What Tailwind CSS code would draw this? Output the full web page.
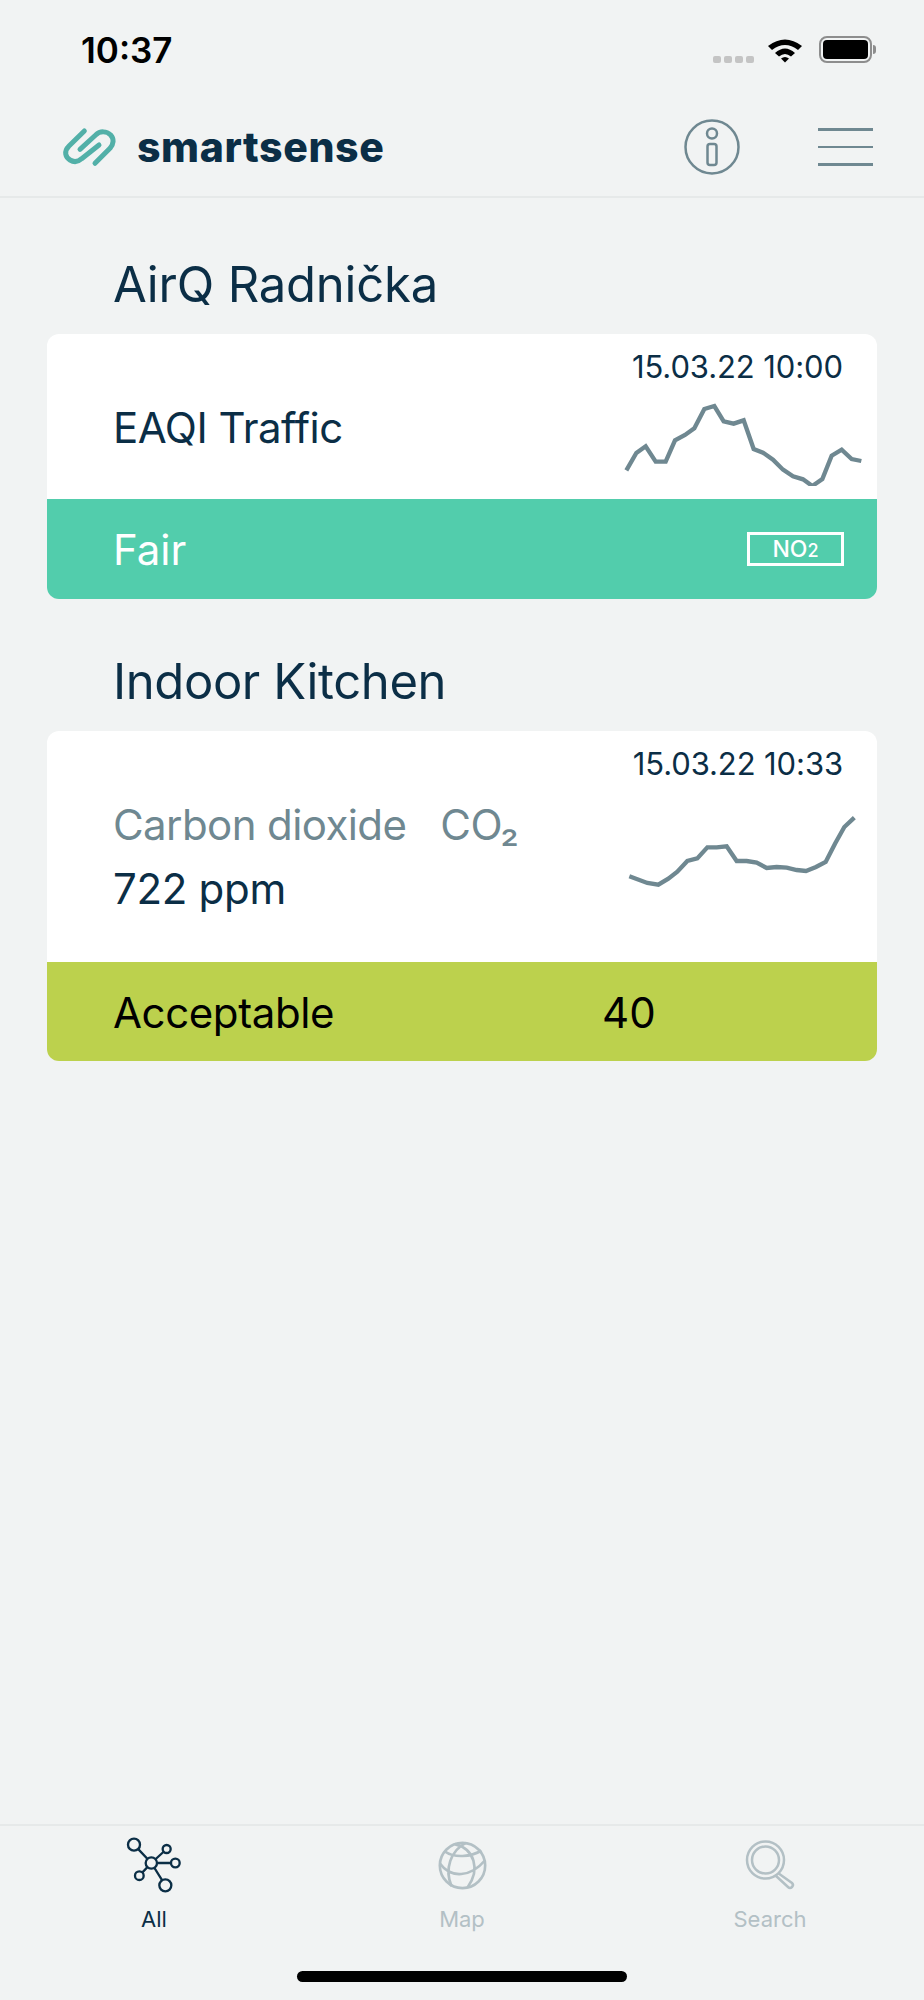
<!DOCTYPE html>
<html lang="en">
<head>
    <meta charset="UTF-8">
    <meta name="viewport" content="width=device-width, initial-scale=1.0">
    <title>smartsense</title>
    <script src="https://cdn.jsdelivr.net/npm/@tailwindcss/browser@4"></script>
</head>
<body class="bg-[#f1f3f3] font-['Inter','Liberation_Sans',sans-serif] text-[#0b2e46]">
    <div class="w-[924px] h-[2000px] flex flex-col overflow-hidden">
        <!-- status bar -->
        <div class="h-[78px] shrink-0 flex items-start justify-between pl-[81px] pr-[48px] pt-[29px]">
            <span class="text-[35px] leading-[42px] font-semibold text-black">10:37</span>
            <div class="flex items-center mt-[7px]">
                <div class="flex gap-[3px] mt-[20px] mr-[13px]">
                    <div class="w-[8px] h-[7px] rounded-[2px] bg-[#c4c4c4]"></div>
                    <div class="w-[8px] h-[7px] rounded-[2px] bg-[#c4c4c4]"></div>
                    <div class="w-[8px] h-[7px] rounded-[2px] bg-[#c4c4c4]"></div>
                    <div class="w-[8px] h-[7px] rounded-[2px] bg-[#c4c4c4]"></div>
                </div>
                <svg width="36" height="27" viewBox="0 0 36 27" class="mr-[16px]">
                    <path d="M1 10 Q18 -3 35 10 L31 14 Q18 4 5 14 Z M8 17 Q18 8 28 17 L24 20.5 Q18 15.500 12 20.500 Z M14 22.500 Q18 19.500 22 22.500 L18 26.500 Z" fill="#000"/>
                </svg>
                <div class="w-[53px] h-[27px] border-[2px] border-[#8d8d8d] rounded-[8px] p-[2px]">
                    <div class="w-full h-full bg-black rounded-[4px]"></div>
                </div>
                <div class="w-[3px] h-[9px] bg-[#8d8d8d] rounded-r-[3px] ml-[1px]"></div>
            </div>
        </div>

        <!-- header -->
        <header class="h-[120px] shrink-0 flex items-center border-b-[2px] border-[#e6e9e9] pl-[55px] pr-[51px] pt-[20px]">
            <svg width="70" height="55" viewBox="0 0 210 165" fill="none" stroke="#52b0a8" stroke-width="15" stroke-linecap="round" stroke-linejoin="round">
                <path d="M88 33 L42 78 C25 95 32 112 45 120 C58 128 70 125 80 116 L132 75"/>
                <path d="M75 88 L122 45 C135 32 155 33 167 45 C178 57 176 72 165 85 L120 130"/>
            </svg>
            <span class="ml-[12px] text-[41px] leading-none font-extrabold text-[#0b2e46] tracking-[0.6px]">smartsense</span>
            <div class="ml-auto flex items-center gap-[78px]">
                <svg width="56" height="56" viewBox="0 0 56 56" fill="none" stroke="#6f8891" stroke-width="2.500">
                    <circle cx="28" cy="28" r="26.500"/>
                    <circle cx="28" cy="14.500" r="5"/>
                    <rect x="23.500" y="25" width="9" height="21" rx="2.500"/>
                </svg>
                <div class="w-[55px] flex flex-col gap-[15px]">
                    <div class="h-[2.500px] bg-[#6f8891]"></div>
                    <div class="h-[2.500px] bg-[#6f8891]"></div>
                    <div class="h-[2.500px] bg-[#6f8891]"></div>
                </div>
            </div>
        </header>

        <main class="flex-1 px-[47px]">
            <!-- AirQ -->
            <h2 class="pl-[66px] mt-[59px] text-[49px] leading-[56px] tracking-[-0.2px]">AirQ Radnička</h2>
            <div class="mt-[21px] rounded-[12px] overflow-hidden">
                <div class="h-[165px] bg-white flex justify-between pl-[66px] pr-[12px]">
                    <div class="pt-[68px] text-[42px] leading-[52px] tracking-[-0.5px]">EAQI Traffic</div>
                    <div class="flex flex-col items-end">
                        <div class="pt-[15px] pr-[22px] text-[31px] leading-[36px] tracking-[-0.1px]">15.03.22 10:00</div>
                        <svg width="242" height="84" viewBox="190 215 726 252" fill="none" stroke="#6f8891" stroke-width="13" class="mt-[17px]">
                            <polyline points="200,420 230,368 258,348 288,394 318,394 346,330 376,314 404,294 434,236 464,227 492,273 522,280 552,270 582,356 610,367 640,388 670,418 700,438 730,447 758,467 788,446 816,376 846,358 876,386 905,392"/>
                        </svg>
                    </div>
                </div>
                <div class="h-[100px] bg-[#52cdac] flex items-center justify-between pl-[66px] pr-[33px] text-white">
                    <span class="pt-[2px] text-[42px] leading-[52px]">Fair</span>
                    <span class="w-[97px] h-[34px] border-[3px] border-white flex items-baseline justify-center text-[23px] leading-[28px] font-medium">NO<span class="text-[18px]">2</span></span>
                </div>
            </div>

            <!-- Indoor -->
            <h2 class="pl-[66px] mt-[55px] text-[49px] leading-[56px] tracking-[-0.4px]">Indoor Kitchen</h2>
            <div class="mt-[21px] rounded-[12px] overflow-hidden">
                <div class="h-[231px] bg-white flex justify-between pl-[66px] pr-[12px]">
                    <div class="pt-[68px]">
                        <div class="text-[42px] leading-[52px] text-[#6f8891] tracking-[-0.6px]">Carbon dioxide<span class="ml-[34px]">CO₂</span></div>
                        <div class="mt-[12px] text-[42px] leading-[52px] tracking-[-0.3px]">722 ppm</div>
                    </div>
                    <div class="flex flex-col items-end">
                        <div class="pt-[15px] pr-[22px] text-[31px] leading-[36px] tracking-[-0.1px]">15.03.22 10:33</div>
                        <svg width="240" height="76" viewBox="195 245 720 228" fill="none" stroke="#6f8891" stroke-width="13" class="mt-[30px]">
                            <polyline points="208,438 262,458 295,463 325,445 352,424 382,392 412,384 442,351 470,351 500,348 530,392 560,392 590,397 620,413 650,410 680,412 710,419 738,422 768,410 797,395 825,340 853,290 883,262"/>
                        </svg>
                    </div>
                </div>
                <div class="h-[99px] bg-[#bcd14d] flex items-center pl-[66px] pt-[2px] text-black">
                    <span class="w-[489px] text-[42px] leading-[52px] tracking-[-0.4px]">Acceptable</span>
                    <span class="text-[42px] leading-[52px]">40</span>
                </div>
            </div>
        </main>

        <!-- tab bar -->
        <nav class="h-[176px] shrink-0 border-t-[2px] border-[#e6e9e9] relative">
            <div class="grid grid-cols-3 pt-[11px]">
                <div class="flex flex-col items-center">
                    <svg width="57" height="57" viewBox="110 80 171 171" fill="none" stroke="#0b2e46" stroke-width="7">
                        <path d="M186 158 L134 103 M186 158 L232 116 M186 158 L258 158 M186 158 L150 196 M186 158 L228 225"/>
                        <circle cx="186" cy="158" r="17" fill="#f1f3f3"/>
                        <circle cx="134" cy="103" r="18" fill="#f1f3f3"/>
                        <circle cx="232" cy="116" r="12" fill="#f1f3f3"/>
                        <circle cx="258" cy="158" r="13" fill="#f1f3f3"/>
                        <circle cx="150" cy="196" r="13" fill="#f1f3f3"/>
                        <circle cx="228" cy="225" r="18" fill="#f1f3f3"/>
                    </svg>
                    <span class="mt-[12px] text-[22px] leading-[27px]">All</span>
                </div>
                <div class="flex flex-col items-center text-[#b3c0c5]">
                    <svg width="57" height="57" viewBox="9.5 4.5 171 171" fill="none" stroke="#b3c0c5" stroke-width="8">
                        <circle cx="95" cy="90" r="68"/>
                        <path d="M42 48 C70 68 120 65 152 45 M28 85 C60 130 120 125 162 75 M62 152 C40 100 60 45 105 22 M72 26 C130 40 150 100 110 156"/>
                    </svg>
                    <span class="mt-[12px] text-[22px] leading-[27px]">Map</span>
                </div>
                <div class="flex flex-col items-center text-[#b3c0c5]">
                    <svg width="57" height="57" viewBox="0 0 57 57" fill="none" stroke="#b3c0c5" stroke-width="2.500">
                        <circle cx="23.500" cy="23" r="18.500"/>
                        <circle cx="23.500" cy="23" r="13.500"/>
                        <path d="M36 36 L50 46 Q52 48 50 50 Q48 52 46 50 L33 38"/>
                    </svg>
                    <span class="mt-[12px] text-[22px] leading-[27px]">Search</span>
                </div>
            </div>
            <div class="absolute left-[297px] bottom-[18px] w-[330px] h-[11px] bg-black rounded-full"></div>
        </nav>
    </div>
</body>
</html>
